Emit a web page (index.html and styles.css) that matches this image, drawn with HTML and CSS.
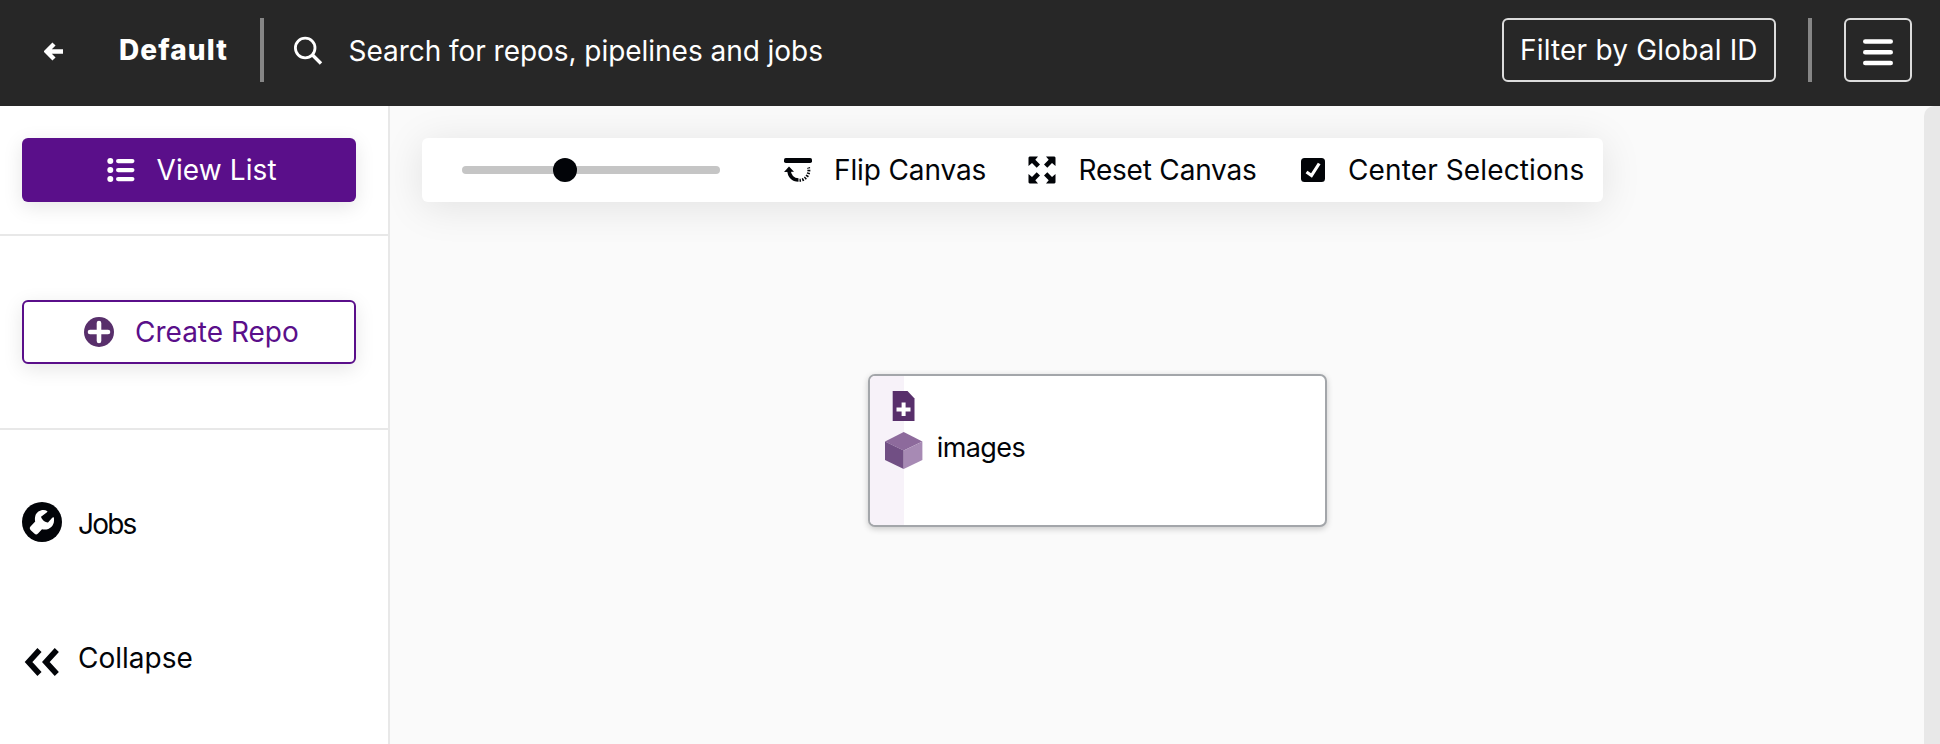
FILE: index.html
```html
<!DOCTYPE html>
<html lang="en">
<head>
<meta charset="utf-8">
<title>Default</title>
<link rel="stylesheet" href="styles.css">
</head>
<body>
<div class="app">
  <header class="header">
    <svg class="back" width="20" height="20" viewBox="0 0 20 20"><path d="M10 2 2.500 9.500 10 17M3 9.500H19" fill="none" stroke="#fff" stroke-width="4.400"/></svg>
    <span class="project">Default</span>
    <span class="divider"></span>
    <svg class="search-icon" width="30" height="30" viewBox="0 0 30 30" fill="none" stroke="#fff"><circle cx="12.200" cy="12" r="9.800" stroke-width="2.800"/><path d="M19 18.500 28 27.500" stroke-width="3.400"/></svg>
    <span class="search">Search for repos, pipelines and jobs</span>
    <button class="outline filter"><span class="t-filter">Filter by Global ID</span></button>
    <span class="divider right"></span>
    <button class="outline menu"><svg width="30" height="28" viewBox="0 0 30 28" stroke="#fff" stroke-width="4.600" stroke-linecap="round"><path d="M2.300 3.500H27.700M2.300 14.200H27.700M2.300 25H27.700"/></svg></button>
  </header>
  <div class="body">
    <nav class="sidebar">
      <section class="view">
        <button class="btn primary">
          <svg width="28" height="24" viewBox="0 0 28 24" fill="#fff"><circle cx="3.300" cy="3" r="3"/><circle cx="3.300" cy="12" r="3"/><circle cx="3.300" cy="21" r="3"/><rect x="9" y="1" width="18.500" height="4.200" rx="2.100"/><rect x="9" y="10" width="18.500" height="4.200" rx="2.100"/><rect x="9" y="19" width="18.500" height="4.200" rx="2.100"/></svg>
          <span class="t-view">View List</span>
        </button>
      </section>
      <section class="create">
        <button class="btn secondary">
          <svg width="30" height="30" viewBox="0 0 30 30"><circle cx="15" cy="15" r="15" fill="#582f6b"/><path d="M15 6V24M6 15H24" stroke="#fff" stroke-width="4.600" stroke-linecap="round"/></svg>
          <span class="t-create">Create Repo</span>
        </button>
      </section>
      <a class="link jobs"><svg width="40" height="40" viewBox="0 0 40 40"><circle cx="20" cy="20" r="20" fill="#020408"/><path d="M25.500 9.200C21 6.500 14.800 8.800 13.300 14C12.800 16 12.800 17.800 13.200 19.500L8.500 24.500C7.200 26 7.800 27.200 9 28.400L12.600 31.800C14 33 15 32.300 16 31.400L20 27.300C26.500 28.800 32 24.500 32 18.500V16.500C32 15 31 15 30 16L26 20.500C24 20.800 20 18.500 19 14.800L25 10.200Z" fill="#fff"/></svg><span class="t-jobs">Jobs</span></a>
      <a class="link collapse"><svg width="40" height="40" viewBox="0 0 40 40" fill="none" stroke="#020408" stroke-width="5.600"><path d="M17.500 8 6.500 20 17.500 32M34.800 8 23.800 20 34.800 32"/></svg><span class="t-collapse">Collapse</span></a>
    </nav>
    <main class="canvas">
      <div class="toolbar">
        <div class="slider"><span class="thumb"></span></div>
        <button class="tool flip">
          <svg width="28" height="26" viewBox="0 0 28 26"><rect y="1" width="28" height="5" rx="1.800" fill="#020408"/><path d="M5 13C5 19 9 23 14.500 23" fill="none" stroke="#020408" stroke-width="3.600"/><path d="M0 15 5 9.500 10 14.800Z" fill="#020408"/><path d="M15.500 23.300A9.500 10 0 0 0 24.500 10.500" fill="none" stroke="#020408" stroke-width="3" stroke-dasharray="1.500 1.300"/></svg>
          <span class="t-flip">Flip Canvas</span>
        </button>
        <button class="tool reset">
          <svg width="28" height="28" viewBox="0 0 28 28"><g id="arrow"><path d="M1.500 .5H10L7.300 3.700 12 8.400 8.700 11.700 4 7 .5 10V1.500Z" fill="#020408"/></g><use href="#arrow" transform="translate(28 0) scale(-1 1)"/><use href="#arrow" transform="translate(0 28) scale(1 -1)"/><use href="#arrow" transform="translate(28 28) scale(-1 -1)"/></svg>
          <span class="t-reset">Reset Canvas</span>
        </button>
        <button class="tool center">
          <svg width="24" height="24" viewBox="0 0 24 24"><rect width="24" height="24" rx="3.500" fill="#020408"/><path d="M5.500 14 10.500 17.500 18.200 5.500" fill="none" stroke="#fff" stroke-width="3.200"/></svg>
          <span class="t-center">Center Selections</span>
        </button>
      </div>
      <div class="node">
        <div class="strip"></div>
        <svg class="node-icons" width="38" height="80" viewBox="0 0 38 80"><path d="M7.700 0H22.500L29.500 7.500V30H7.700Z" fill="#582f6b"/><path d="M18.600 11.500V25M11.500 18.500H25.500" stroke="#fff" stroke-width="4"/><path d="M0 50.500 18.700 41 37.400 50.500 18.700 59.500Z" fill="#8d6a9c"/><path d="M0 50.500 18.700 59.500V78L0 69Z" fill="#714f84"/><path d="M37.400 50.500 18.700 59.500V78L37.400 69Z" fill="#a78ab4"/></svg>
        <span class="t-images">images</span>
      </div>
    </main>
    <div class="scrollbar"></div>
  </div>
</div>
</body>
</html>
```
FILE: styles.css
```css
* { box-sizing: border-box; }
body { margin: 0; font-family: Inter, "Liberation Sans", sans-serif; font-size: 28px; line-height: 34px; color: #020408; }
button { font: inherit; color: inherit; background: none; border: 0; padding: 0; text-align: left; }
svg { display: block; flex: none; }
span { white-space: nowrap; }
.app { width: 1940px; height: 744px; display: flex; flex-direction: column; overflow: hidden; }
.header { height: 106px; flex: none; background: #272727; color: #fff; display: flex; align-items: flex-start; padding: 18px 28px 0 44px; }
.back { margin-top: 24px; }
.project { width: 141px; margin: 15px 0 0 55px; font-weight: 800; letter-spacing: 1.1px; }
.divider { width: 4px; height: 64px; background: #868686; }
.search-icon { margin: 18px 0 0 29px; }
.search { margin: 16px auto 0 25.500px; letter-spacing: -.04px; }
.outline { height: 64px; border: 2px solid #dcdcdc; border-radius: 6px; display: flex; }
.filter { width: 274px; padding: 13px 0 0 16px; letter-spacing: .18px; }
.divider.right { margin: 0 32px; }
.menu { width: 68px; padding: 18px 0 0 17px; }
.body { flex: 1; display: flex; min-height: 0; }
.sidebar { width: 390px; flex: none; border-right: 2px solid #e8e8e8; background: #fff; }
.view { height: 130px; padding: 32px 0 0 22px; border-bottom: 2px solid #e8e8e8; }
.create { height: 194px; padding: 64px 0 0 22px; border-bottom: 2px solid #e8e8e8; }
.btn { width: 334px; height: 64px; border-radius: 6px; display: flex; align-items: center; box-shadow: 0 5px 20px rgba(0,0,0,.1); }
.primary { background: #5a0f8a; color: #fff; padding-left: 85px; gap: 21.500px; letter-spacing: .1px; }
.secondary { background: #fff; color: #5a0f8a; border: 2px solid #5a0f8a; padding-left: 60px; gap: 21px; }
.link { display: flex; padding-left: 22px; gap: 16px; }
.jobs { padding-top: 72px; }
.jobs span { margin-top: 5px; letter-spacing: -1.800px; }
.collapse { padding-top: 100px; }
.collapse span { margin-top: -1px; }
.canvas { flex: 1; background: #fafafa; padding: 32px 0 0 32px; }
.toolbar { width: 1181px; height: 64px; border-radius: 6px; background: #fff; display: flex; align-items: center; padding-left: 40px; box-shadow: 0 5px 40px rgba(0,0,0,.1); }
.slider { width: 258px; height: 8px; border-radius: 4px; background: #c5c5c5; display: flex; align-items: center; }
.thumb { width: 24px; height: 24px; border-radius: 50%; background: #020408; margin-left: 91px; }
.tool { display: flex; align-items: center; }
.flip { width: 244px; margin-left: 64px; gap: 22px; letter-spacing: -.12px; }
.reset { width: 273px; gap: 22.500px; letter-spacing: -.2px; }
.center { gap: 23px; letter-spacing: .12px; }
.node { display: flex; width: 459px; height: 153px; margin: 172px 0 0 446px; border: 2px solid #a3a6aa; border-radius: 7px; background: #fff; box-shadow: 0 2px 6px rgba(0,0,0,.2); overflow: hidden; }
.strip { width: 33.500px; background: #f7f2f9; }
.node-icons { margin: 15px 0 0 -18.700px; }
.t-images { font-size: 27px; letter-spacing: -.6px; margin: 55px 0 0 14px; }
.scrollbar { width: 16px; background: #e8e8e8; border-radius: 10px 0 0 0; box-shadow: -10px 0 0 #fafafa; }
```
